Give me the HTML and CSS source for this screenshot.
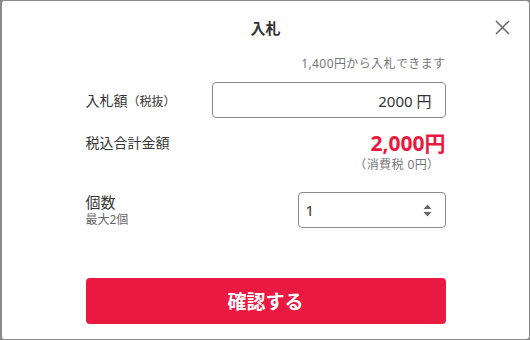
FILE: index.html
```html
<!DOCTYPE html>
<html lang="ja">
<head>
    <meta charset="UTF-8">
    <meta name="viewport" content="width=device-width, initial-scale=1.0">
    <title>入札</title>
    <link rel="stylesheet" href="styles.css">
</head>
<body>
    <div class="modal">
        <div class="modal-header">
            <h1 class="modal-title">入札</h1>
            <button class="close-btn" aria-label="閉じる">
                <svg width="15" height="15" viewBox="0 0 15 15">
                    <path d="M1 1 L14 14 M14 1 L1 14" stroke="#666" stroke-width="1.5" fill="none"/>
                </svg>
            </button>
        </div>

        <div class="modal-body">
            <p class="note">1,400円から入札できます</p>

            <div class="row">
                <div class="label">入札額<span class="small">（税抜）</span></div>
                <div class="input-box price-input">2000 円</div>
            </div>

            <div class="row total-row">
                <div class="label">税込合計金額</div>
                <div class="total">
                    <div class="total-price">2,000円</div>
                    <div class="tax">（消費税 0円）</div>
                </div>
            </div>

            <div class="row qty-row">
                <div class="label">
                    <div class="qty-label">個数</div>
                    <div class="sub">最大2個</div>
                </div>
                <div class="input-box qty-input">
                    <span>1</span>
                    <svg class="spin" width="9" height="13" viewBox="0 0 9 13">
                        <path d="M4.5 0.5 L8.5 5 L0.5 5 Z M0.5 8 L8.5 8 L4.5 12.5 Z" fill="#666"/>
                    </svg>
                </div>
            </div>

            <button class="btn">確認する</button>
        </div>
    </div>
</body>
</html>
```

FILE: styles.css
```css
body {
    margin: 0;
    padding: 0;
    background-color: #888;
    font-family: "Noto Sans", "Noto Sans CJK JP", sans-serif;
    color: #333;
}

.modal {
    box-sizing: border-box;
    width: 530px;
    height: 340px;
    background-color: #fff;
    border: 1px solid #8a8a8a;
    border-left-width: 2px;
    border-radius: 4px;
}

.modal-header {
    position: relative;
    height: 53px;
    display: flex;
    align-items: center;
    justify-content: center;
}

.modal-title {
    margin: 0;
    font-size: 15px;
    font-weight: bold;
    color: #333;
    line-height: 20px;
}

.close-btn {
    position: absolute;
    right: 19px;
    top: 19px;
    padding: 0;
    border: none;
    background: none;
    width: 15px;
    height: 15px;
    cursor: pointer;
}

.close-btn svg {
    display: block;
}

.modal-body {
    width: 360px;
    margin: 0 auto;
}

.note {
    margin: 1px 0 0;
    text-align: right;
    font-size: 12px;
    line-height: 18px;
    letter-spacing: 0.4px;
    color: #777;
}

.row {
    display: flex;
    justify-content: space-between;
    align-items: center;
    margin-top: 9px;
}

.label {
    font-size: 14px;
    color: #333;
}

.label .small {
    font-size: 12px;
}

.input-box {
    box-sizing: border-box;
    height: 36px;
    border: 1px solid #8a8a8a;
    border-radius: 4px;
    font-size: 15px;
    color: #333;
    display: flex;
    align-items: center;
}

.price-input {
    width: 234px;
    justify-content: flex-end;
    padding-right: 13px;
}

.total-row {
    margin-top: 11px;
    align-items: flex-start;
}

.total-row .label {
    line-height: 28px;
}

.total {
    text-align: right;
}

.total-price {
    font-size: 21px;
    font-weight: bold;
    line-height: 28px;
    color: #e8193f;
}

.tax {
    font-size: 12px;
    line-height: 16px;
    letter-spacing: 0.4px;
    color: #777;
    margin-right: 6px;
}

.qty-row {
    margin-top: 19px;
    align-items: flex-start;
}

.qty-label {
    font-size: 15px;
    line-height: 20px;
}

.sub {
    font-size: 12px;
    line-height: 16px;
    color: #666;
}

.qty-input {
    width: 148px;
    justify-content: space-between;
    padding: 0 13px 0 7px;
}

.spin {
    display: block;
}

.btn {
    display: block;
    width: 360px;
    height: 46px;
    margin-top: 50px;
    border: none;
    border-radius: 4px;
    background-color: #ea1941;
    color: #fff;
    font-family: "Noto Sans", "Noto Sans CJK JP", sans-serif;
    font-size: 19px;
    font-weight: bold;
    cursor: pointer;
}
```
